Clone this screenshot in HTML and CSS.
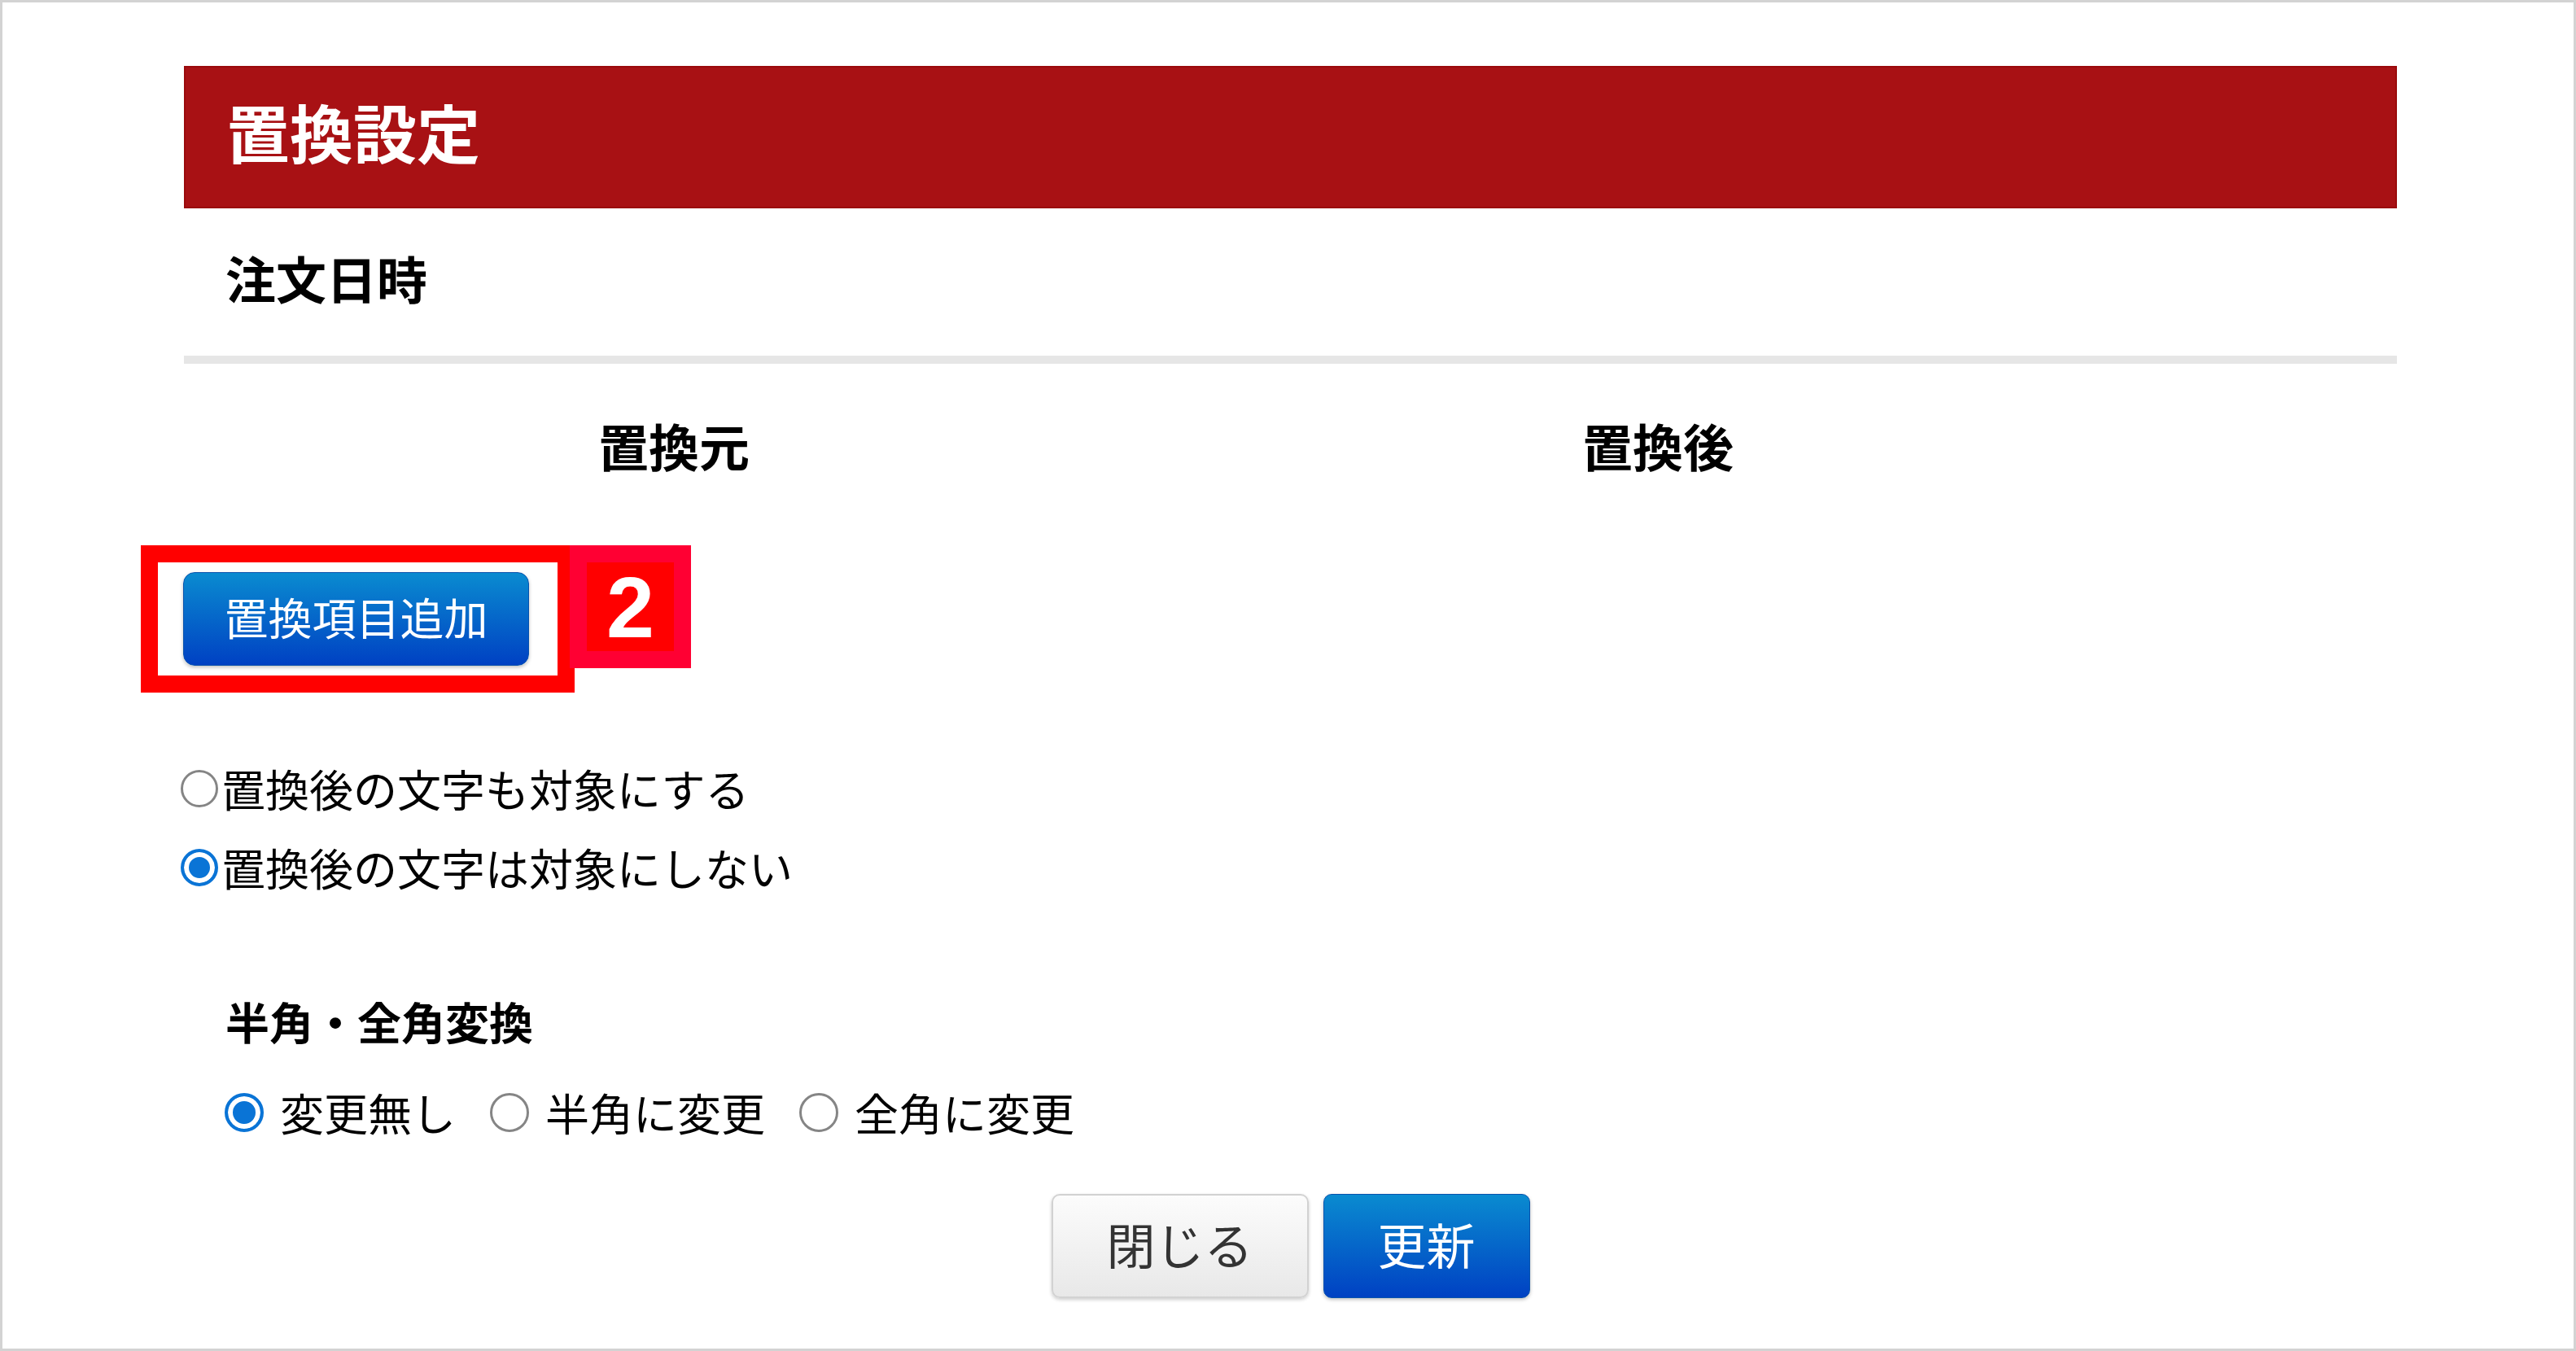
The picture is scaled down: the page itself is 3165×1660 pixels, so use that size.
FILE: index.html
```html
<!DOCTYPE html>
<html lang="ja">
<head>
    <meta charset="UTF-8">
    <meta name="viewport" content="width=device-width, initial-scale=1.0">
    <title>置換設定</title>
    <link rel="stylesheet" href="styles.css">
</head>
<body>

<div class="frame">
    <div class="panel">

        <h2 class="titulo">置換設定</h2>

        <div class="campo">注文日時</div>

        <div class="columnas">
            <div class="col">置換元</div>
            <div class="col">置換後</div>
            <div class="col"></div>
        </div>

        <!-- boton con la marca roja de la guia -->
        <div class="marca">
            <div class="marca-caja">
                <button class="btn-azul btn-agregar">置換項目追加</button>
            </div>
            <div class="marca-num"><span>2</span></div>
        </div>

        <div class="opciones">
            <label class="fila"><input type="radio" name="objetivo" class="radio">置換後の文字も対象にする</label>
            <label class="fila"><input type="radio" name="objetivo" class="radio" checked>置換後の文字は対象にしない</label>
        </div>

        <div class="subtitulo">半角・全角変換</div>

        <div class="conversion">
            <label class="fila2"><input type="radio" name="conv" class="radio radio2" checked>変更無し</label>
            <label class="fila2"><input type="radio" name="conv" class="radio radio2">半角に変更</label>
            <label class="fila2"><input type="radio" name="conv" class="radio radio2">全角に変更</label>
        </div>

        <div class="botones">
            <button class="btn-gris">閉じる</button>
            <button class="btn-azul btn-actualizar">更新</button>
        </div>

    </div>
</div>

</body>
</html>
```

FILE: styles.css
```css
html, body{
    margin: 0;
    padding: 0;
    background: #ffffff;
}

body{
    font-family: "Noto Sans CJK JP", "Noto Sans", sans-serif;
    color: #000000;
}

.frame{
    box-sizing: border-box;
    width: 3165px;
    height: 1660px;
    border: 3px solid #d3d3d3;
    background: #ffffff;
}

.panel{
    width: 2719px;
    margin-left: 223px;
    padding-top: 78px;
}

.titulo{
    box-sizing: border-box;
    height: 175px;
    margin: 0;
    padding-left: 50px;
    padding-bottom: 16px;
    display: flex;
    align-items: center;
    background: #a81114;
    border: 2px solid #9a0a0c;
    color: #ffffff;
    font-size: 78px;
    font-weight: bold;
    line-height: 1;
}

.campo{
    box-sizing: border-box;
    height: 191px;
    padding-left: 51px;
    padding-bottom: 12px;
    display: flex;
    align-items: center;
    font-size: 62px;
    font-weight: bold;
    line-height: 1;
    border-bottom: 10px solid #e6e6e6;
}

.columnas{
    box-sizing: border-box;
    display: grid;
    grid-template-columns: 1204px 1214px 1fr;
    height: 208px;
    padding-bottom: 8px;
    align-items: center;
}

.col{
    text-align: center;
    font-size: 62px;
    font-weight: bold;
    line-height: 1;
}

/* marca roja */
.marca{
    display: flex;
    align-items: flex-start;
    margin-left: -53px;
    margin-top: 15px;
}

.marca-caja{
    border: 21px solid #ff0000;
    padding: 12px 35px 12px 31px;
    background: #ffffff;
}

.marca-num{
    box-sizing: border-box;
    width: 149px;
    height: 151px;
    margin-left: -6px;
    border: 21px solid #ff0033;
    background: #ff0000;
    display: flex;
    align-items: center;
    justify-content: center;
}

.marca-num span{
    font-family: "Liberation Sans", Arial, sans-serif;
    font-weight: bold;
    font-size: 106px;
    line-height: 1;
    color: #ffffff;
}

.btn-azul{
    border: 1px solid #0752ad;
    background: linear-gradient(#0a8bd0, #0041c3);
    color: #ffffff;
    font-family: "Noto Sans CJK JP", sans-serif;
    box-shadow: 0 2px 4px rgba(0, 0, 0, .25);
    cursor: pointer;
    padding: 0;
}

.btn-agregar{
    display: block;
    width: 425px;
    height: 115px;
    border-radius: 14px;
    font-size: 54px;
    line-height: 1;
    padding-bottom: 6px;
}

.opciones{
    margin-top: 69px;
    margin-left: -4px;
}

.fila{
    box-sizing: border-box;
    height: 97px;
    display: flex;
    align-items: center;
    gap: 4px;
    font-size: 54px;
    line-height: 1;
}

.radio{
    appearance: none;
    -webkit-appearance: none;
    box-sizing: border-box;
    width: 46px;
    height: 46px;
    margin: 0;
    border: 3px solid #858585;
    border-radius: 50%;
    background: #ffffff;
    flex: none;
}

.radio:checked{
    border: 4px solid #0a74d6;
    background: #0a74d6;
    box-shadow: inset 0 0 0 6px #ffffff;
}

.subtitulo{
    margin-top: 101px;
    height: 80px;
    padding-left: 51px;
    display: flex;
    align-items: center;
    font-size: 54px;
    font-weight: bold;
    line-height: 1;
}

.conversion{
    margin-top: 32px;
    height: 80px;
    padding-left: 50px;
    display: flex;
    align-items: center;
    gap: 42px;
}

.fila2{
    display: flex;
    align-items: center;
    gap: 20px;
    font-size: 54px;
    line-height: 1;
}

.radio2{
    width: 48px;
    height: 48px;
}

.botones{
    margin-top: 60px;
    display: flex;
    justify-content: center;
    gap: 18px;
}

.btn-gris{
    width: 316px;
    height: 128px;
    border: 2px solid #d2d2d2;
    border-radius: 10px;
    background: linear-gradient(#fcfcfc, #e8e8e8);
    box-shadow: 0 2px 4px rgba(0, 0, 0, .2);
    color: #333333;
    font-family: "Noto Sans CJK JP", sans-serif;
    font-size: 60px;
    line-height: 1;
    padding: 0 0 6px 0;
    cursor: pointer;
}

.btn-actualizar{
    width: 254px;
    height: 128px;
    border-radius: 10px;
    font-size: 60px;
    line-height: 1;
    padding-bottom: 6px;
}
```
